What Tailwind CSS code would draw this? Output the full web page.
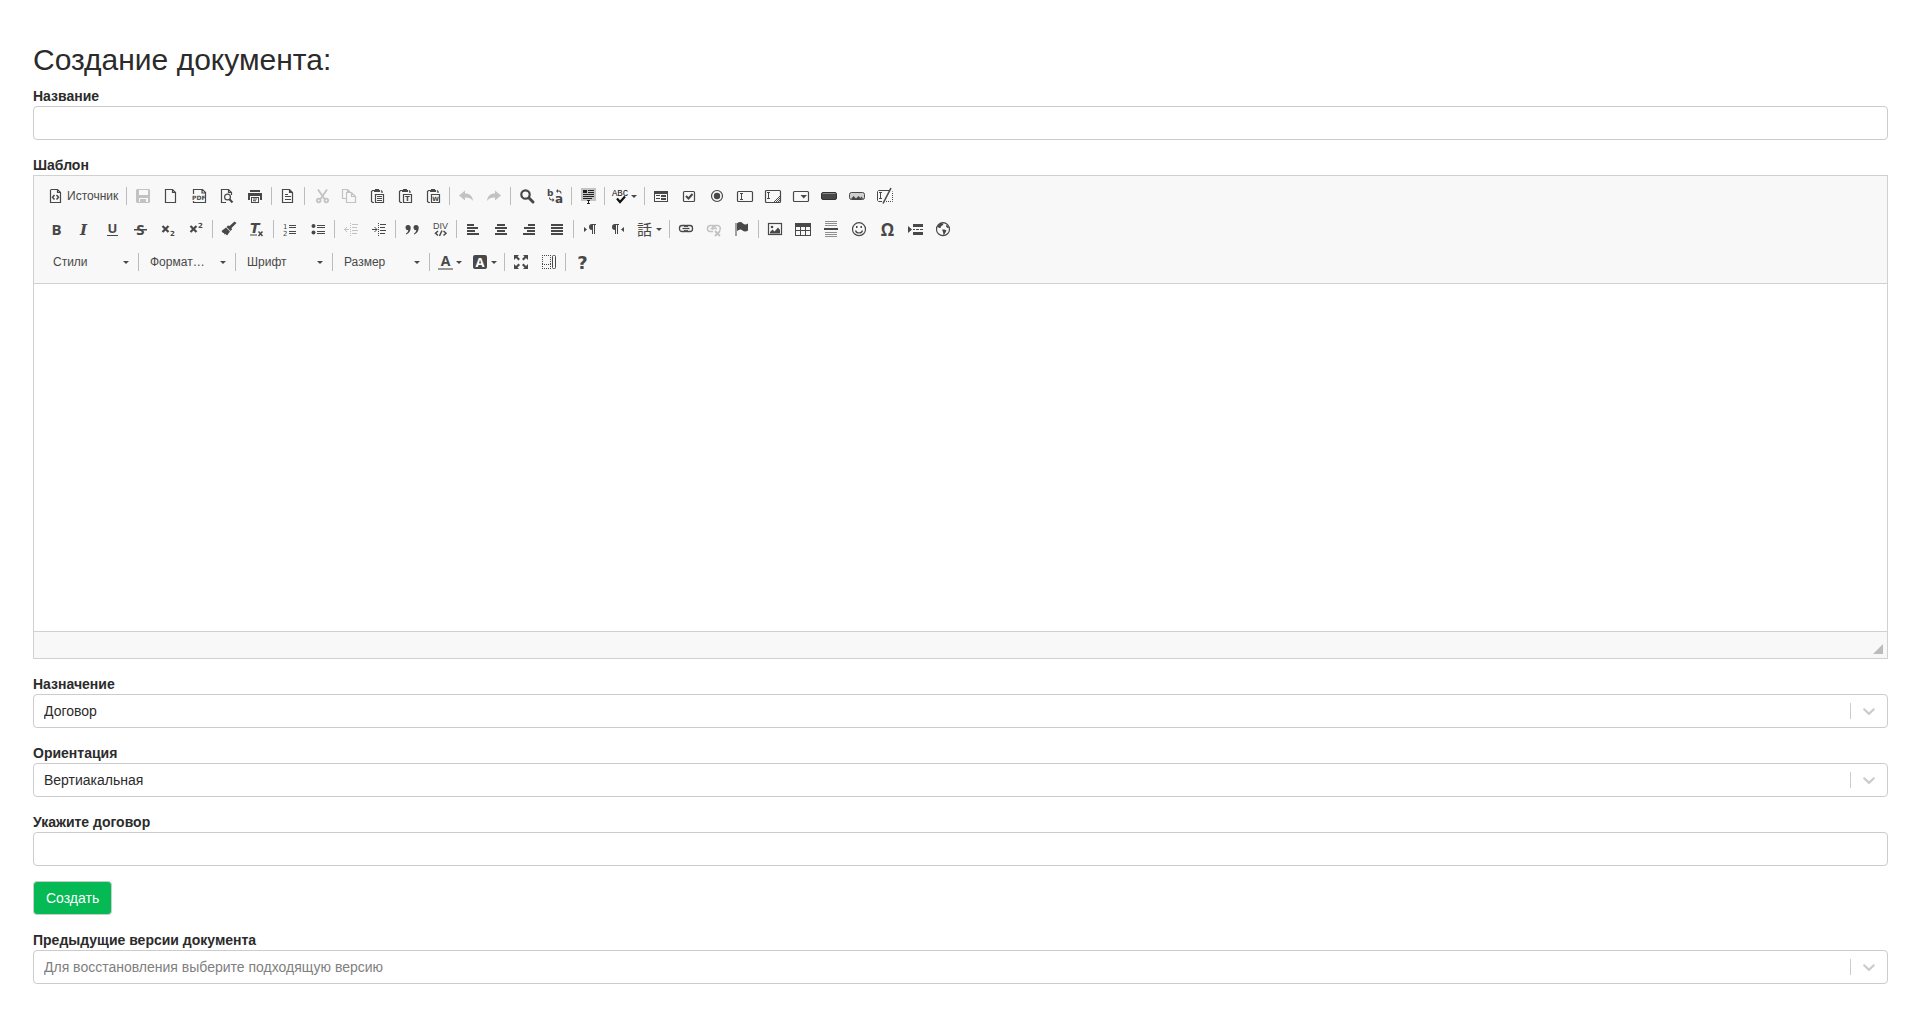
<!DOCTYPE html>
<html lang="ru">
<head>
    <meta charset="UTF-8">
    <meta name="viewport" content="width=device-width, initial-scale=1.0">
    <title>Создание документа</title>
    <script src="https://cdn.jsdelivr.net/npm/@tailwindcss/browser@4"></script>
</head>
<body class="bg-white font-['Liberation_Sans',Arial,sans-serif] text-sm leading-5 text-[#2b2b2b]">

    <main class="pt-[43px] pb-12 pl-[33px] pr-8">
        <h2 class="mb-2.5 text-[30px] leading-[33px]">Создание документа:</h2>

        <form onsubmit="return false">
            <div class="mb-[15px]">
                <label for="title" class="block font-bold">Название</label>
                <input type="text" id="title" name="title" class="block h-[34px] w-full rounded border border-[#ccc] px-3 focus:border-blue-400 focus:outline-none">
            </div>

            <!-- Editor -->
            <div class="mb-[15px]">
                <label for="template" class="block font-bold">Шаблон</label>
                <div class="border border-[#d1d1d1]">
                    <div class="border-b border-[#d1d1d1] bg-[#f8f8f8] px-2 pt-1.5 pb-0.5 text-xs text-[#484848] [&_button]:flex [&_button]:h-7 [&_button]:shrink-0 [&_button]:items-center [&_button]:px-1.5 [&_button:disabled]:opacity-30 [&_hr]:mx-0.5 [&_hr]:h-[18px] [&_hr]:w-px [&_hr]:border-0 [&_hr]:bg-[#bcbcbc] [&_svg]:overflow-visible">

                        <!-- Row 1 -->
                        <div class="mb-[5px] flex items-center">
                            <button type="button" class="w-[82px] gap-[3px]">
                                <svg class="size-4 shrink-0" viewBox="0 0 16 16" fill="none" stroke="currentColor"><path d="M2.5 2v12.5h10V4.5L9.5 1.5h-7M9.5 1.5v3h3" stroke-width="1.200"/><path d="M6.500 7 4.500 9.250l2 2.250M8.500 7l2 2.250-2 2.250" stroke-width="1.500"/></svg>
                                Источник
                            </button>
                            <hr>
                            <button type="button" aria-label="Сохранить" disabled><svg class="size-4" viewBox="0 0 16 16" fill="currentColor"><path fill-rule="evenodd" d="M2 1h12l1 1v12l-1 1H2l-1-1V2zM4 2v5h9V2zM4 10v4h1v-3h6v3h2v-4z"/><path d="M6 12h2v2H6z"/></svg></button>
                            <button type="button" aria-label="Новая страница"><svg class="size-4" viewBox="0 0 16 16" fill="none" stroke="currentColor" stroke-width="1.200"><path d="M2.500 1.500h7l3 3v10h-10zM9.500 1.500v3h3"/></svg></button>
                            <button type="button" aria-label="PDF"><svg class="size-4" viewBox="0 0 16 16"><path d="M2.500 6V1.500h9l3 3v10h-12V13M11 1.500V5h3.500" fill="none" stroke="currentColor" stroke-width="1.200"/><path d="M0 6h14v6H0z" fill="#f8f8f8"/><text x="1" y="11.500" font-family="DejaVu Sans" font-weight="bold" font-size="6" fill="currentColor">PDF</text></svg></button>
                            <button type="button" aria-label="Предпросмотр"><svg class="size-4" viewBox="0 0 16 16" fill="none" stroke="currentColor" stroke-width="1.200"><path d="M7 14.500H2.500v-13h7l3 3V7M9.500 1.500v3h3"/><circle cx="8.500" cy="9" r="2.900"/><path d="m10.500 11.300 3 3.200" stroke-width="2"/></svg></button>
                            <button type="button" aria-label="Печать"><svg class="size-4" viewBox="0 0 16 16" fill="currentColor"><path d="M3 2h10v2H3zM1 5h14v7h-2V8H3v4H1z"/><path d="M4 9h8v6H4zm1 1v4h6v-4z" fill-rule="evenodd"/><path d="M6 10.500h4v1H6zM6 12.300h3v1H6z"/></svg></button>
                            <hr>
                            <button type="button" aria-label="Шаблоны"><svg class="size-4" viewBox="0 0 16 16" fill="none" stroke="currentColor" stroke-width="1.200"><path d="M2.500 1.500h7l3 3v10h-10zM9.500 1.500v3h3M5 6.500h3M5 8.500h6M5 11.500h6"/></svg></button>
                            <hr>
                            <button type="button" aria-label="Вырезать" disabled><svg class="size-4" viewBox="0 0 16 16" fill="none" stroke="currentColor" stroke-width="1.800"><path d="m5 1.500 6.500 9.500M14 1.500 7.500 11"/><circle cx="5.700" cy="12.500" r="1.800"/><circle cx="13.300" cy="12.500" r="1.800"/></svg></button>
                            <button type="button" aria-label="Копировать" disabled><svg class="size-4" viewBox="0 0 16 16" fill="none" stroke="currentColor" stroke-width="1.200"><path d="M5 10.500H1.500v-9h5l3 3M6.500 1.500V4M5.500 4.500h5l4 4v6h-9zM10.500 4.500v4h4"/></svg></button>
                            <button type="button" aria-label="Вставить"><svg class="size-4" viewBox="0 0 16 16" fill="none" stroke="currentColor" stroke-width="1.200"><path d="M5 2.500H3.500l-1 1v10l1 1H5M12 2.500l1 1V5"/><path d="M6 1h4v1h1v2H5V2h1z" fill="currentColor" stroke="none"/><path d="M6.500 6.500h8v8h-8zM8 8.500h5M8 10.500h5M8 12.500h5"/></svg></button>
                            <button type="button" aria-label="Вставить только текст"><svg class="size-4" viewBox="0 0 16 16" fill="none" stroke="currentColor" stroke-width="1.200"><path d="M5 2.500H3.500l-1 1v10l1 1H5M12 2.500l1 1V5"/><path d="M6 1h4v1h1v2H5V2h1z" fill="currentColor" stroke="none"/><path d="M6.500 6.500h8v8h-8z"/><text x="10.500" y="13" text-anchor="middle" font-family="DejaVu Sans" font-weight="bold" font-size="7" fill="currentColor" stroke="none">T</text></svg></button>
                            <button type="button" aria-label="Вставить из Word"><svg class="size-4" viewBox="0 0 16 16" fill="none" stroke="currentColor" stroke-width="1.200"><path d="M5 2.500H3.500l-1 1v10l1 1H5M12 2.500l1 1V5"/><path d="M6 1h4v1h1v2H5V2h1z" fill="currentColor" stroke="none"/><path d="M6.500 6.500h8v8h-8z"/><text x="10.500" y="13" text-anchor="middle" font-family="DejaVu Sans" font-weight="bold" font-size="6" fill="currentColor" stroke="none">W</text></svg></button>
                            <hr>
                            <button type="button" aria-label="Отменить" disabled><svg class="size-4" viewBox="0 0 16 16" fill="currentColor"><path d="M1 7.500 7 2.500v3c5 0 7.500 2.500 8 7.500-1.500-2.500-4-3.500-8-3.500v3z"/></svg></button>
                            <button type="button" aria-label="Повторить" disabled><svg class="size-4" viewBox="0 0 16 16" fill="currentColor"><path d="M15 7.500 9 2.500v3c-5 0-7.500 2.500-8 7.500 1.500-2.500 4-3.500 8-3.500v3z"/></svg></button>
                            <hr>
                            <button type="button" aria-label="Найти"><svg class="size-4" viewBox="0 0 16 16" fill="none" stroke="currentColor"><circle cx="6.500" cy="6.500" r="4.200" stroke-width="2.200"/><path d="m10 10 4 4" stroke-width="3" stroke-linecap="round"/></svg></button>
                            <button type="button" aria-label="Заменить"><svg class="size-4" viewBox="0 0 16 16" fill="currentColor"><text x="0" y="8" font-family="DejaVu Sans" font-weight="bold" font-size="9">b</text><text x="8" y="15" font-family="DejaVu Sans" font-weight="bold" font-size="12">a</text><path d="M9 3l2-2v1.500c2 0 3.500 .500 3.500 3h-1C13.500 4 12.500 3.500 11 3.500V5zM7.500 12l-2-2v1.500C4 11.500 3 11 3 9.500H2c0 2 1 3 3.500 3V14z"/></svg></button>
                            <hr>
                            <button type="button" aria-label="Выделить все"><svg class="size-4" viewBox="0 0 16 16" shape-rendering="crispEdges"><path d="M1 0h15v13H1z" fill="#c4c4c4"/><path d="M3 2h4v3H3zM8 2h6v1H8zM8 4h6v1H8zM3 6h11v1H3zM3 8h11v1H3zM3 10h9v1H3z" fill="#222"/><path d="M7 12h3v1H7zM8 13h1v2H8zM7 15h3v1H7z" fill="#222"/></svg></button>
                            <hr>
                            <button type="button" aria-label="Проверка орфографии" class="w-[35px] gap-0.5"><svg class="size-4 shrink-0" viewBox="0 0 16 16"><text x="7" y="8" text-anchor="middle" font-family="Liberation Mono" font-size="9" fill="#111">ABC</text><path d="m4 10.500 3 3.500 5-5.500" fill="none" stroke="#111" stroke-width="2.200"/></svg><svg class="h-[3px] w-1.5 shrink-0" viewBox="0 0 6 3" fill="currentColor"><path d="M0 0h6L3 3z"/></svg></button>
                            <hr>
                            <button type="button" aria-label="Форма"><svg class="size-4" viewBox="0 0 16 16" fill="currentColor" shape-rendering="crispEdges"><path fill-rule="evenodd" d="M1 3h14v11H1zM2 6v7h12V6z"/><path d="M3 7h4v1H3zM8 7h5v2H8zM3 10h4v1H3zM8 10h5v2H8z"/></svg></button>
                            <button type="button" aria-label="Флажок"><svg class="size-4" viewBox="0 0 16 16" fill="none" stroke="currentColor"><rect x="2.500" y="3.500" width="11" height="10" rx="1" stroke-width="1.200"/><path d="m5 8 2.500 2.500L11.500 6" stroke-width="2"/></svg></button>
                            <button type="button" aria-label="Переключатель"><svg class="size-4" viewBox="0 0 16 16" fill="none" stroke="currentColor"><circle cx="8" cy="8" r="5.500" stroke-width="1.200"/><circle cx="8" cy="8" r="3.200" fill="currentColor" stroke="none"/></svg></button>
                            <button type="button" aria-label="Текстовое поле"><svg class="size-4" viewBox="0 0 16 16" fill="none" stroke="currentColor"><rect x="0.500" y="3.500" width="15" height="10" rx="1" stroke-width="1.200"/><path d="M3 5.500h3M3 11.500h3M4.500 5.500v6"/></svg></button>
                            <button type="button" aria-label="Многострочное поле"><svg class="size-4" viewBox="0 0 16 16" fill="none" stroke="currentColor"><rect x="0.500" y="2.500" width="15" height="12" rx="1" stroke-width="1.200"/><path d="M2 4.500h3M2 10.500h3M3.500 4.500v6M9 14l6-6M11 14l4-4M13 14l2-2"/></svg></button>
                            <button type="button" aria-label="Список"><svg class="size-4" viewBox="0 0 16 16" fill="none" stroke="currentColor"><rect x="0.500" y="3.500" width="15" height="10" rx="1" stroke-width="1.200"/><path d="M7.500 7h6.500l-3.250 3.500z" fill="currentColor" stroke="none"/></svg></button>
                            <button type="button" aria-label="Кнопка"><svg class="size-4" viewBox="0 0 16 16"><rect x="0.500" y="4.500" width="15" height="7" rx="1.500" fill="#484848" stroke="#333"/><path d="M1.500 5.500h13" stroke="#888"/></svg></button>
                            <button type="button" aria-label="Кнопка-изображение"><svg class="size-4" viewBox="0 0 16 16"><rect x="0.500" y="4.500" width="15" height="7" rx="2" fill="#d0d0d0" stroke="currentColor"/><path d="M2 11l2.500-3L7 10.500 9.500 8l3 3z" fill="currentColor"/><path d="M11 10.500l1.500-2 2 2.500z" fill="currentColor"/></svg></button>
                            <button type="button" aria-label="Скрытое поле"><svg class="size-4" viewBox="0 0 16 16" fill="none" stroke="currentColor"><path d="M12 2.500H1.500l-1 1v9l1 1H5"/><path d="M2 4.500h3M2 10.500h3M3.500 4.500v6"/><path d="M9 13.500h6.500v-10" stroke-dasharray="1 1"/><path d="M14 0 6 15.500" stroke-width="1.600"/></svg></button>
                        </div>

                        <!-- Row 2 -->
                        <div class="mb-[5px] flex items-center">
                            <button type="button" aria-label="Полужирный"><svg class="size-4" viewBox="0 0 16 16" fill="currentColor"><text x="8.500" y="14" text-anchor="middle" font-family="Open Sans" font-weight="bold" font-size="15">B</text></svg></button>
                            <button type="button" aria-label="Курсив"><svg class="size-4" viewBox="0 0 16 16" fill="currentColor"><text x="7.500" y="14" text-anchor="middle" font-family="DejaVu Serif" font-weight="bold" font-style="italic" font-size="15">I</text></svg></button>
                            <button type="button" aria-label="Подчеркнутый"><svg class="size-4" viewBox="0 0 16 16" fill="currentColor"><text x="8.500" y="12" text-anchor="middle" font-family="Open Sans" font-weight="bold" font-size="13">U</text><path d="M3 14h11v1H3z"/></svg></button>
                            <button type="button" aria-label="Зачеркнутый"><svg class="size-4" viewBox="0 0 16 16" fill="currentColor"><text x="8.500" y="14" text-anchor="middle" font-family="Open Sans" font-weight="bold" font-size="15">S</text><path d="M2 8h13v1.500H2z"/></svg></button>
                            <button type="button" aria-label="Подстрочный"><svg class="size-4" viewBox="0 0 16 16" fill="currentColor"><path d="m2.500 5 6 6M8.500 5l-6 6" stroke="currentColor" stroke-width="2.200"/><text x="10" y="15" font-family="DejaVu Sans" font-weight="bold" font-size="7">2</text></svg></button>
                            <button type="button" aria-label="Надстрочный"><svg class="size-4" viewBox="0 0 16 16" fill="currentColor"><path d="m2.500 5 6 6M8.500 5l-6 6" stroke="currentColor" stroke-width="2.200"/><text x="10" y="7" font-family="DejaVu Sans" font-weight="bold" font-size="7">2</text></svg></button>
                            <hr>
                            <button type="button" aria-label="Копировать формат"><svg class="size-4" viewBox="0 0 16 16" fill="currentColor"><path d="M13.500.500 15.500 2l-5 5 .500 1.500-1.500 1.500L5.500 6 7 4.500 8.500 5zM5 6.500 9 10.500l-3 4L4.500 13l-1 .500-.500-1.500H2L.500 10z"/></svg></button>
                            <button type="button" aria-label="Убрать форматирование"><svg class="size-4" viewBox="0 0 16 16" fill="currentColor"><text x="1" y="12" font-family="DejaVu Sans" font-weight="bold" font-style="italic" font-size="14">T</text><path d="M1 13.500h7v1H1z"/><path d="m9.500 10.500 4 4.500M13.500 10.500l-4 4.500" stroke="currentColor" stroke-width="1.500"/></svg></button>
                            <hr>
                            <button type="button" aria-label="Нумерованный список"><svg class="size-4" viewBox="0 0 16 16" fill="currentColor"><text x="1" y="7.500" font-family="DejaVu Sans" font-size="7">1</text><text x="1" y="15" font-family="DejaVu Sans" font-size="7">2</text><path d="M7 4h7v1H7zM7 6h7v1H7zM7 10h7v1H7zM7 12h7v1H7z"/></svg></button>
                            <button type="button" aria-label="Маркированный список"><svg class="size-4" viewBox="0 0 16 16" fill="currentColor"><circle cx="3.500" cy="5" r="2"/><circle cx="3.500" cy="11.500" r="2"/><path d="M7 4h8v1H7zM7 6h8v1H7zM7 10h8v1H7zM7 12h8v1H7z"/></svg></button>
                            <hr>
                            <button type="button" aria-label="Уменьшить отступ" disabled><svg class="size-4" viewBox="0 0 16 16" fill="none" stroke="currentColor"><path d="M9 3.500h6M9 6.500h5M9 9.500h6M9 12.500h5M1.500 8.500H6M4 6 1.500 8.500 4 11"/><path d="M7.500 2v13" stroke-dasharray="1 1"/></svg></button>
                            <button type="button" aria-label="Увеличить отступ"><svg class="size-4" viewBox="0 0 16 16" fill="none" stroke="currentColor"><path d="M9 3.500h6M9 6.500h5M9 9.500h6M9 12.500h5M1 8.500h5M3.500 6 6 8.500 3.500 11"/><path d="M7.500 2v13" stroke-dasharray="1 1"/></svg></button>
                            <hr>
                            <button type="button" aria-label="Цитата"><svg class="size-4" viewBox="0 0 16 16" fill="currentColor"><path d="M4 4a2.500 2.500 0 0 1 2.700 2.800C6.700 10 5 12.500 2 13.500v-1c1.500-1 2.200-2 2.300-3.200A2.650 2.650 0 0 1 4 4zM12 4a2.500 2.500 0 0 1 2.700 2.800c0 3.200-1.700 5.700-4.700 6.700v-1c1.500-1 2.200-2 2.300-3.200A2.650 2.650 0 0 1 12 4z"/></svg></button>
                            <button type="button" aria-label="DIV-контейнер"><svg class="size-4" viewBox="0 0 16 16" fill="currentColor"><text x="8.500" y="8" text-anchor="middle" font-family="Liberation Sans" font-size="9">DIV</text><path d="M6 10 3.500 12.250 6 14.500M11.500 10l2.500 2.250-2.500 2.250M10 9.500l-2.500 5.500" fill="none" stroke="currentColor" stroke-width="1.500"/></svg></button>
                            <hr>
                            <button type="button" aria-label="По левому краю"><svg class="size-4" viewBox="0 0 16 16" fill="currentColor"><path d="M2 3h7v2H2zM2 6h11v2H2zM2 9h8v2H2zM2 12h12v2H2z"/></svg></button>
                            <button type="button" aria-label="По центру"><svg class="size-4" viewBox="0 0 16 16" fill="currentColor"><path d="M4 3h8v2H4zM2 6h12v2H2zM4 9h8v2H4zM2 12h12v2H2z"/></svg></button>
                            <button type="button" aria-label="По правому краю"><svg class="size-4" viewBox="0 0 16 16" fill="currentColor"><path d="M7 3h7v2H7zM3 6h11v2H3zM6 9h8v2H6zM2 12h12v2H2z"/></svg></button>
                            <button type="button" aria-label="По ширине"><svg class="size-4" viewBox="0 0 16 16" fill="currentColor"><path d="M2 3h12v2H2zM2 6h12v2H2zM2 9h12v2H2zM2 12h12v2H2z"/></svg></button>
                            <hr>
                            <button type="button" aria-label="Слева направо"><svg class="size-4" viewBox="0 0 16 16" fill="currentColor"><path d="M2 6l3 2.500L2 11zM14 3v1h-1v9h-1V4h-1v9h-1V9a3 3 0 0 1 0-6z"/></svg></button>
                            <button type="button" aria-label="Справа налево"><svg class="size-4" viewBox="0 0 16 16" fill="currentColor"><path d="M14 6l-3 2.500 3 2.500zM9 3v1H8v9H7V4H6v9H5V9a3 3 0 0 1 0-6z"/></svg></button>
                            <button type="button" aria-label="Язык" class="w-[35px] gap-0.5"><svg class="size-4 shrink-0" viewBox="0 0 16 16" fill="currentColor"><text x="-1" y="14" font-family="Noto Sans CJK JP" font-size="15">話</text></svg><svg class="h-[3px] w-1.5 shrink-0" viewBox="0 0 6 3" fill="currentColor"><path d="M0 0h6L3 3z"/></svg></button>
                            <hr>
                            <button type="button" aria-label="Ссылка"><svg class="size-4" viewBox="0 0 16 16" fill="none" stroke="currentColor" stroke-width="1.300"><rect x="1.500" y="4.500" width="8" height="6" rx="2.500"/><rect x="6.500" y="4.500" width="8" height="6" rx="2.500"/><path d="M4.500 7.500h7" stroke="#f8f8f8" stroke-width="3"/><path d="M4.500 7.500h7"/></svg></button>
                            <button type="button" aria-label="Убрать ссылку" disabled><svg class="size-4" viewBox="0 0 16 16" fill="none" stroke="currentColor" stroke-width="1.500"><path d="M7 10.500H4a2.500 2.500 0 0 1-2.500-3 3 3 0 0 1 2.500-3h3a2 2 0 0 1 2 2M7 8.500a3 3 0 0 1-.500-1 3 3 0 0 1 2.500-3h3a3 3 0 0 1 1.500 5M4.500 7.500H11"/><path d="m9 10 5 5M14 10l-5 5" stroke-width="1.800"/></svg></button>
                            <button type="button" aria-label="Якорь"><svg class="size-4" viewBox="0 0 16 16" fill="currentColor"><path d="M1.500 2h1v13h-1zM3 2.500C5 .800 7 .500 9 2.500c1.500 1.200 3 1.300 5 0v7c-2 1.500-4 1.200-5.500 0-1.700-1.500-3.500-1-5.500.500z"/></svg></button>
                            <hr>
                            <button type="button" aria-label="Изображение"><svg class="size-4" viewBox="0 0 16 16" fill="currentColor"><rect x="1.500" y="2.500" width="13" height="11" fill="none" stroke="currentColor" stroke-width="1.200"/><circle cx="5" cy="6" r="1.300"/><path d="M3 12.500V11l2.500-2.500 2 2 3.500-4 2 2.500v3.500z"/></svg></button>
                            <button type="button" aria-label="Таблица"><svg class="size-4" viewBox="0 0 16 16" fill="currentColor" shape-rendering="crispEdges"><path fill-rule="evenodd" d="M0 2h16v13H0zM1 6v3h4V6zM6 6v3h4V6zM11 6v3h4V6zM1 10v4h4v-4zM6 10v4h4v-4zM11 10v4h4v-4z"/></svg></button>
                            <button type="button" aria-label="Горизонтальная линия"><svg class="size-4" viewBox="0 0 16 16" shape-rendering="crispEdges"><path d="M2 0h12v1H2zM2 2h12v1H2zM2 4h12v1H2zM2 11h12v1H2zM2 13h12v1H2zM2 15h12v1H2z" fill="#8e8e8e"/><path d="M1 7h14v2H1z" fill="currentColor"/></svg></button>
                            <button type="button" aria-label="Смайл"><svg class="size-4" viewBox="0 0 16 16" fill="none" stroke="currentColor" stroke-width="1.200"><circle cx="8" cy="8.200" r="6.500"/><path d="M4.500 9.500c.500 1.800 2 2.500 3.500 2.500s3-.700 3.500-2.500"/><path d="M5 5h1.500v2H5zM9.500 5H11v2H9.500z" fill="currentColor" stroke="none"/></svg></button>
                            <button type="button" aria-label="Специальный символ"><svg class="size-4" viewBox="0 0 16 16" fill="currentColor"><text x="8.500" y="15" text-anchor="middle" font-family="Open Sans" font-weight="bold" font-size="17">Ω</text></svg></button>
                            <button type="button" aria-label="Разрыв страницы"><svg class="size-4" viewBox="0 0 16 16" fill="currentColor"><path d="M1 5l4 3.500L1 12zM6 3h10v3H6zM6 11h10v3H6zM6 8h2v1H6zM9 8h3v1H9zM13 8h3v1h-3z"/></svg></button>
                            <button type="button" aria-label="IFrame"><svg class="size-4" viewBox="0 0 16 16" fill="currentColor"><circle cx="8" cy="8.200" r="6.500" fill="none" stroke="currentColor" stroke-width="1.200"/><path d="M2.500 5 5.500 2l3 .500L8 4 6.500 5 5.500 6l.500 1H4.500L2.500 6zM7 8.500h2.500l2 1-1 2L9 14H8.500L8 11zM11.500 3.500l2.500 3-1.500.500-1.500-1.500z"/></svg></button>
                        </div>

                        <!-- Row 3 -->
                        <div class="mb-[5px] flex items-center">
                            <div class="flex items-center">
                                <div class="relative">
                                    <select aria-label="Стили" class="block h-7 w-[94px] appearance-none pl-[11px]"><option>Стили</option></select>
                                    <svg class="pointer-events-none absolute top-[13px] right-[7px] h-[3px] w-1.5" viewBox="0 0 6 3" fill="currentColor"><path d="M0 0h6L3 3z"/></svg>
                                </div>
                                <hr>
                            </div>
                            <div class="flex items-center">
                                <div class="relative">
                                    <select aria-label="Форматирование" class="block h-7 w-[92px] appearance-none pl-[9px]"><option>Формат…</option></select>
                                    <svg class="pointer-events-none absolute top-[13px] right-[7px] h-[3px] w-1.5" viewBox="0 0 6 3" fill="currentColor"><path d="M0 0h6L3 3z"/></svg>
                                </div>
                                <hr>
                            </div>
                            <div class="flex items-center">
                                <div class="relative">
                                    <select aria-label="Шрифт" class="block h-7 w-[92px] appearance-none pl-[9px]"><option>Шрифт</option></select>
                                    <svg class="pointer-events-none absolute top-[13px] right-[7px] h-[3px] w-1.5" viewBox="0 0 6 3" fill="currentColor"><path d="M0 0h6L3 3z"/></svg>
                                </div>
                                <hr>
                            </div>
                            <div class="flex items-center">
                                <div class="relative">
                                    <select aria-label="Размер" class="block h-7 w-[92px] appearance-none pl-[9px]"><option>Размер</option></select>
                                    <svg class="pointer-events-none absolute top-[13px] right-[7px] h-[3px] w-1.5" viewBox="0 0 6 3" fill="currentColor"><path d="M0 0h6L3 3z"/></svg>
                                </div>
                                <hr>
                            </div>
                            <button type="button" aria-label="Цвет текста" class="w-[35px] gap-0.5"><svg class="size-4 shrink-0" viewBox="0 0 16 16" fill="currentColor"><text x="7.500" y="12" text-anchor="middle" font-family="Open Sans" font-weight="bold" font-size="14">A</text><path d="M0 14h15v2H0z" fill="#999"/></svg><svg class="h-[3px] w-1.5 shrink-0" viewBox="0 0 6 3" fill="currentColor"><path d="M0 0h6L3 3z"/></svg></button>
                            <button type="button" aria-label="Цвет фона" class="w-[35px] gap-0.5"><svg class="size-4 shrink-0" viewBox="0 0 16 16"><rect x="0" y="1" width="14" height="14" rx="2" fill="currentColor"/><text x="7" y="12.500" text-anchor="middle" font-family="Open Sans" font-weight="bold" font-size="13" fill="#fff">A</text></svg><svg class="h-[3px] w-1.5 shrink-0" viewBox="0 0 6 3" fill="currentColor"><path d="M0 0h6L3 3z"/></svg></button>
                            <hr>
                            <button type="button" aria-label="Развернуть"><svg class="size-4" viewBox="0 0 16 16" fill="currentColor"><path d="M1 1h5L4.500 2.500l2.500 2.500L5.500 6.500 3 4 1 6zM15 1v5l-2-2-2.500 2.500L9 5l2.500-2.500L10 1zM1 15v-5l2 2 2.500-2.500L7 11l-2.500 2.500L6 15zM15 15h-5l1.500-1.500L9 11l1.500-1.500L13 12l2-2z"/></svg></button>
                            <button type="button" aria-label="Отображать блоки"><svg class="size-4" viewBox="0 0 16 16" fill="none" stroke="currentColor"><path d="M1.500 1v9M1 1.500h9M9.500 1v9M1 10.500h9M1 14.500h9M1.500 12v2M9.500 12v2" stroke-dasharray="1 1"/><rect x="11.500" y="1.500" width="3" height="13" rx="1"/></svg></button>
                            <hr>
                            <button type="button" aria-label="О редакторе"><svg class="size-4" viewBox="0 0 16 16" fill="currentColor"><text x="8.500" y="15" text-anchor="middle" font-family="DejaVu Sans" font-weight="bold" font-size="18">?</text></svg></button>
                        </div>
                    </div>

                    <textarea id="template" name="template" class="block h-[347px] w-full resize-none bg-white p-5 focus:outline-none"></textarea>

                    <div class="flex h-[27px] items-end justify-end border-t border-[#d1d1d1] bg-[#f8f8f8] px-1 pb-1">
                        <svg class="size-2.5" viewBox="0 0 10 10" fill="#bcbcbc"><path d="M10 0v10H0z"/></svg>
                    </div>
                </div>
            </div>

            <div class="mb-[15px]">
                <label for="purpose" class="block font-bold">Назначение</label>
                <div class="relative">
                    <select id="purpose" name="purpose" class="block h-[34px] w-full appearance-none rounded border border-[#ccc] bg-white px-2.5">
                        <option>Договор</option>
                    </select>
                    <div class="pointer-events-none absolute inset-y-0 right-[9px] flex items-center gap-2 text-[#ccc]">
                        <span class="h-4 w-px bg-[#ccc]"></span>
                        <svg class="size-5" viewBox="0 0 20 20" fill="none" stroke="currentColor" stroke-width="2.200" stroke-linecap="round" stroke-linejoin="round"><path d="m5.200 8.300 4.800 4.600 4.800-4.600"/></svg>
                    </div>
                </div>
            </div>

            <div class="mb-[15px]">
                <label for="orientation" class="block font-bold">Ориентация</label>
                <div class="relative">
                    <select id="orientation" name="orientation" class="block h-[34px] w-full appearance-none rounded border border-[#ccc] bg-white px-2.5">
                        <option>Вертиакальная</option>
                    </select>
                    <div class="pointer-events-none absolute inset-y-0 right-[9px] flex items-center gap-2 text-[#ccc]">
                        <span class="h-4 w-px bg-[#ccc]"></span>
                        <svg class="size-5" viewBox="0 0 20 20" fill="none" stroke="currentColor" stroke-width="2.200" stroke-linecap="round" stroke-linejoin="round"><path d="m5.200 8.300 4.800 4.600 4.800-4.600"/></svg>
                    </div>
                </div>
            </div>

            <div class="mb-[15px]">
                <label for="contract" class="block font-bold">Укажите договор</label>
                <input type="text" id="contract" name="contract" class="block h-[34px] w-full rounded border border-[#ccc] px-3 focus:border-blue-400 focus:outline-none">
            </div>

            <button type="submit" class="mb-[15px] block h-[34px] rounded border border-[#ccc] bg-[#05b955] px-3 text-white hover:bg-[#04a54c]">Создать</button>

            <div>
                <label for="versions" class="block font-bold">Предыдущие версии документа</label>
                <div class="relative">
                    <select id="versions" name="versions" class="block h-[34px] w-full appearance-none rounded border border-[#ccc] bg-white px-2.5 text-[#808080]">
                        <option>Для восстановления выберите подходящую версию</option>
                    </select>
                    <div class="pointer-events-none absolute inset-y-0 right-[9px] flex items-center gap-2 text-[#ccc]">
                        <span class="h-4 w-px bg-[#ccc]"></span>
                        <svg class="size-5" viewBox="0 0 20 20" fill="none" stroke="currentColor" stroke-width="2.200" stroke-linecap="round" stroke-linejoin="round"><path d="m5.200 8.300 4.800 4.600 4.800-4.600"/></svg>
                    </div>
                </div>
            </div>
        </form>
    </main>

</body>
</html>
